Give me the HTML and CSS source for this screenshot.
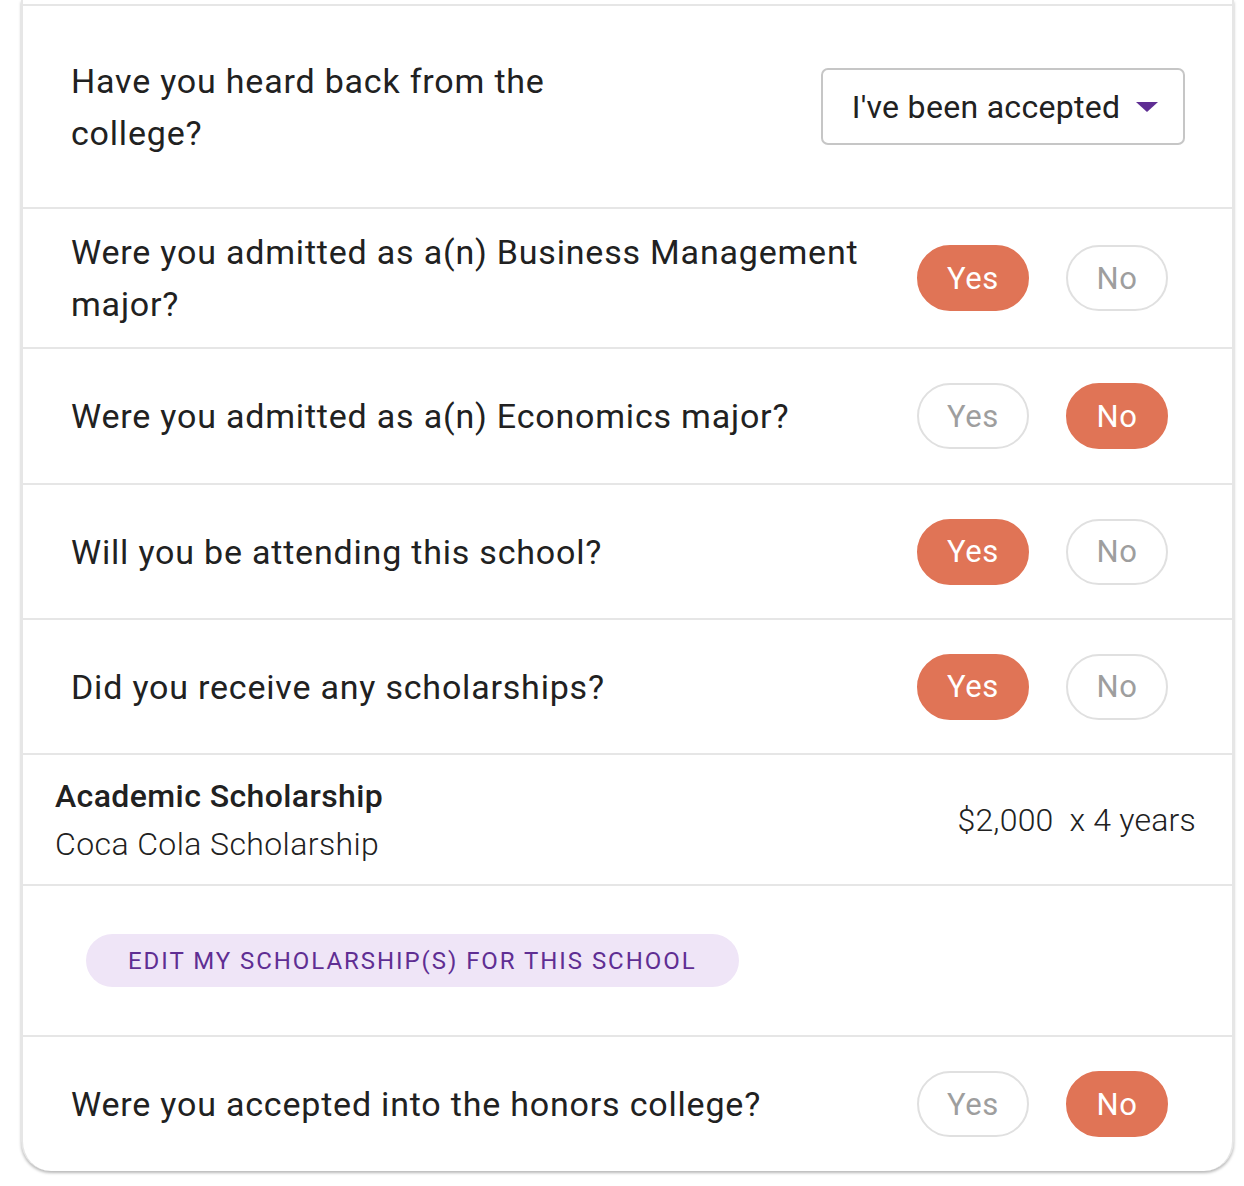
FILE: index.html
```html
<!DOCTYPE html>
<html>
<head>
<meta charset="utf-8">
<link rel="stylesheet" href="styles.css">
</head>
<body>
<div class="card">
  <div class="top-cap"></div>
  <div class="row row-status">
    <div class="question q-narrow">Have you heard back from the college?</div>
    <div class="select">
      <span>I've been accepted</span>
      <svg class="caret" width="22" height="10" viewBox="0 0 22 10"><path d="M0 0 L22 0 L11 10 Z" fill="#5f2e93"/></svg>
    </div>
  </div>
  <div class="row row-q">
    <div class="question">Were you admitted as a(n) Business Management major?</div>
    <div class="choices"><span class="btn on">Yes</span><span class="btn">No</span></div>
  </div>
  <div class="row row-q row-tall">
    <div class="question">Were you admitted as a(n) Economics major?</div>
    <div class="choices"><span class="btn">Yes</span><span class="btn on">No</span></div>
  </div>
  <div class="row row-q">
    <div class="question">Will you be attending this school?</div>
    <div class="choices"><span class="btn on">Yes</span><span class="btn">No</span></div>
  </div>
  <div class="row row-q">
    <div class="question">Did you receive any scholarships?</div>
    <div class="choices"><span class="btn on">Yes</span><span class="btn">No</span></div>
  </div>
  <div class="row row-sch">
    <div class="sch-names">
      <div class="sch-type">Academic Scholarship</div>
      <div class="sch-name">Coca Cola Scholarship</div>
    </div>
    <div class="sch-amount">$2,000&nbsp; x 4 years</div>
  </div>
  <div class="row row-edit">
    <span class="edit-btn">EDIT MY SCHOLARSHIP(S) FOR THIS SCHOOL</span>
  </div>
  <div class="row row-q row-last">
    <div class="question">Were you accepted into the honors college?</div>
    <div class="choices"><span class="btn">Yes</span><span class="btn on">No</span></div>
  </div>
</div>
</body>
</html>
```

FILE: styles.css
```css
* { box-sizing: border-box; }
html, body {
  margin: 0;
  padding: 0;
  background: #ffffff;
  font-family: Roboto, "Liberation Sans", sans-serif;
  color: #212121;
}
.card {
  margin: 0 10px 14px 21px;
  background: #fff;
  border-left: 2px solid #e6e6e6;
  border-right: 2px solid #e6e6e6;
  border-radius: 0 0 30px 30px;
  box-shadow: 0 2px 3px rgba(0,0,0,0.28);
  overflow: hidden;
}
.top-cap {
  height: 6px;
  border-bottom: 2px solid #e6e6e6;
}
.row {
  display: flex;
  align-items: center;
  justify-content: space-between;
  border-bottom: 2px solid #e6e6e6;
}
.question {
  font-size: 34px;
  line-height: 52px;
  letter-spacing: 0.8px;
}
.row-status {
  height: 203px;
  padding: 0 47px 0 48px;
}
.q-narrow { width: 520px; }
.select {
  width: 364px;
  height: 77px;
  border: 2px solid #c6c6c6;
  border-radius: 7px;
  display: flex;
  align-items: center;
  justify-content: center;
  gap: 16px;
  font-size: 32px;
  letter-spacing: 0.3px;
  padding-left: 4px;
}
.caret { margin-top: 1px; }
.row-q {
  min-height: 135px;
  padding: 17px 64px 17px 48px;
}
.row-tall { min-height: 136px; }
.row-last { border-bottom: none; min-height: 134px; }
.row-q .question { flex: 1; padding-right: 40px; }
.choices {
  display: flex;
  gap: 37px;
}
.btn {
  display: inline-flex;
  align-items: center;
  justify-content: center;
  height: 66px;
  border: 2px solid #e0e0e0;
  border-radius: 33px;
  font-size: 31px;
  letter-spacing: 0.6px;
  color: #9e9e9e;
  background: #fff;
}
.btn:first-child { width: 112px; }
.btn:last-child { width: 102px; }
.btn.on {
  background: #e07456;
  border-color: #e07456;
  color: #fff;
}
.row-sch {
  height: 131px;
  padding: 0 36px 0 32px;
}
.sch-type {
  font-size: 32px;
  font-weight: 500;
  line-height: 48px;
  letter-spacing: 0.4px;
}
.sch-name {
  font-size: 32px;
  font-weight: 300;
  line-height: 48px;
  letter-spacing: 0.4px;
}
.sch-amount {
  font-size: 32px;
  font-weight: 300;
  letter-spacing: 0.2px;
}
.row-edit {
  height: 151px;
  padding: 0 0 0 63px;
  justify-content: flex-start;
}
.edit-btn {
  display: inline-flex;
  align-items: center;
  height: 53px;
  padding: 0 42px;
  border-radius: 27px;
  background: #efe5f7;
  color: #5f2e93;
  font-size: 24px;
  letter-spacing: 1.95px;
}
```
